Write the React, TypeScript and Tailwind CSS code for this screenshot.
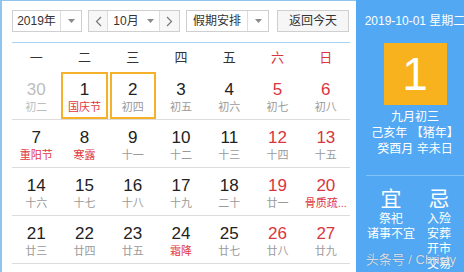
import React from "react";

type Day = { n: number; l: string; muted?: boolean; redNum?: boolean; redLunar?: boolean; pick?: boolean };

const weeks: Day[][] = [
  [
    { n: 30, l: "初二", muted: true },
    { n: 1, l: "国庆节", redLunar: true, pick: true },
    { n: 2, l: "初四", pick: true },
    { n: 3, l: "初五" },
    { n: 4, l: "初六" },
    { n: 5, l: "初七", redNum: true },
    { n: 6, l: "初八", redNum: true },
  ],
  [
    { n: 7, l: "重阳节", redLunar: true },
    { n: 8, l: "寒露", redLunar: true },
    { n: 9, l: "十一" },
    { n: 10, l: "十二" },
    { n: 11, l: "十三" },
    { n: 12, l: "十四", redNum: true },
    { n: 13, l: "十五", redNum: true },
  ],
  [
    { n: 14, l: "十六" },
    { n: 15, l: "十七" },
    { n: 16, l: "十八" },
    { n: 17, l: "十九" },
    { n: 18, l: "二十" },
    { n: 19, l: "廿一", redNum: true },
    { n: 20, l: "骨质疏...", redNum: true, redLunar: true },
  ],
  [
    { n: 21, l: "廿三" },
    { n: 22, l: "廿四" },
    { n: 23, l: "廿五" },
    { n: 24, l: "霜降", redLunar: true },
    { n: 25, l: "廿七" },
    { n: 26, l: "廿八", redNum: true },
    { n: 27, l: "廿九", redNum: true },
  ],
];

const weekdays = ["一", "二", "三", "四", "五", "六", "日"];

const Caret = () => (
  <svg width="7" height="4" viewBox="0 0 7 4">
    <path d="M0 0h7L3.5 4z" fill="#8a8a8a" />
  </svg>
);

const Chevron = ({ dir }: { dir: "l" | "r" }) => (
  <svg width="7" height="11" viewBox="0 0 7 11">
    <path
      d={dir === "l" ? "M6 1L1.5 5.5 6 10" : "M1 1l4.5 4.5L1 10"}
      fill="none"
      stroke="#777"
      strokeWidth="1.2"
    />
  </svg>
);

const App: React.FC = () => {
  return (
    <div
      className="relative flex w-[464px] h-[272px] overflow-hidden bg-white text-[#333]"
      style={{ fontFamily: '"Liberation Sans", "Noto Sans CJK SC", sans-serif' }}
    >
      {/* calendar */}
      <div className="w-[356px] shrink-0 border-l-2 border-t border-[#8ec4ee] pl-[10px] pr-[6px]">
        <div className="flex h-[22px] mt-[9px] text-[12px]">
          <div className="flex w-[70px] border border-[#cfcfcf] bg-white">
            <div className="flex-1 flex items-center justify-center">2019年</div>
            <div className="w-[21px] border-l border-[#ddd] flex items-center justify-center">
              <Caret />
            </div>
          </div>
          <div className="ml-[6px] flex w-[92px] border border-[#cfcfcf] bg-white">
            <div className="w-[19px] border-r border-[#ddd] bg-[#f7f7f7] flex items-center justify-center">
              <Chevron dir="l" />
            </div>
            <div className="flex-1 flex items-center justify-center gap-[8px]">
              <span>10月</span>
              <Caret />
            </div>
            <div className="w-[20px] border-l border-[#ddd] bg-[#f7f7f7] flex items-center justify-center">
              <Chevron dir="r" />
            </div>
          </div>
          <div className="ml-[6px] flex w-[83px] border border-[#cfcfcf] bg-white">
            <div className="flex-1 flex items-center justify-center">假期安排</div>
            <div className="w-[21px] border-l border-[#ddd] flex items-center justify-center">
              <Caret />
            </div>
          </div>
          <div className="ml-[8px] w-[72px] border border-[#cfcfcf] bg-[#f6f6f6] flex items-center justify-center">
            返回今天
          </div>
        </div>
        <div className="mt-[10px] h-px bg-[#a9d3f3]" />
        <div className="grid grid-cols-7 h-[29px] text-[13px]">
          {weekdays.map((w, i) => (
            <div
              key={w}
              className={`flex items-center justify-center ${i >= 5 ? "text-[#d9363e]" : "text-[#333]"}`}
            >
              {w}
            </div>
          ))}
        </div>
        {weeks.map((row, r) => (
          <div key={r} className="grid grid-cols-7 h-[48px] border-b border-[#dcdcdc]">
            {row.map((d) => (
              <div key={d.n} className="px-[1px]">
                <div
                  className={`h-[47px] flex flex-col items-center border-2 pt-[6px] ${
                    d.pick ? "border-[#f6b12a]" : "border-transparent"
                  }`}
                >
                  <div
                    className={`text-[17px] leading-[20px] ${
                      d.muted ? "text-[#bdbdbd]" : d.redNum ? "text-[#d9363e]" : "text-[#222]"
                    }`}
                  >
                    {d.n}
                  </div>
                  <div
                    className={`text-[11px] leading-[15px] whitespace-nowrap ${
                      d.redLunar ? "text-[#e0383e]" : d.muted ? "text-[#bdbdbd]" : "text-[#9a9a9a]"
                    }`}
                  >
                    {d.l}
                  </div>
                </div>
              </div>
            ))}
          </div>
        ))}
      </div>

      {/* today panel */}
      <div className="w-[118px] shrink-0 bg-[#52a8f2] text-white flex flex-col items-center">
        <div className="mt-[14px] text-[12px] leading-[14px] whitespace-nowrap">2019-10-01 星期二</div>
        <div className="mt-[15px] w-[63px] h-[64px] bg-[#f8b21d] flex items-center justify-center text-[46px] leading-none">
          1
        </div>
        <div className="mt-[4px] text-[12px] leading-[16px] text-center whitespace-nowrap">
          <div>九月初三</div>
          <div>己亥年 【猪年】</div>
          <div>癸酉月 辛未日</div>
        </div>
        <div className="mt-[18px] self-stretch mx-[10px] h-px bg-[#85c2f6]" />
        <div className="mt-[9px] flex w-[96px]">
          <div className="flex-1 flex flex-col items-center">
            <div className="text-[21px] leading-[27px]">宜</div>
            <div className="text-[12px] leading-[15px] text-center whitespace-nowrap">
              <div>祭祀</div>
              <div>诸事不宜</div>
            </div>
          </div>
          <div className="flex-1 flex flex-col items-center">
            <div className="text-[21px] leading-[27px]">忌</div>
            <div className="text-[12px] leading-[15px] text-center whitespace-nowrap">
              <div>入殓</div>
              <div>安葬</div>
              <div>开市</div>
              <div>交易</div>
            </div>
          </div>
        </div>
      </div>

      <div className="absolute right-[8px] bottom-[3px] text-[13px] text-[#d6dbe3] [text-shadow:0_0_1px_rgba(0,0,0,0.2)] whitespace-nowrap">
        头条号 / Christy
      </div>
    </div>
  );
};

export default App;
